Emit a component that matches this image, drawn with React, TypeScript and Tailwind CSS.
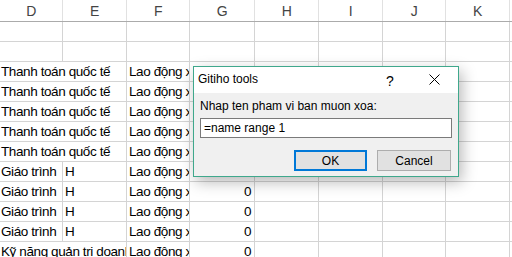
import React from "react"

const COLS = [
  { key: "D", w: 63 },
  { key: "E", w: 64 },
  { key: "F", w: 63 },
  { key: "G", w: 65 },
  { key: "H", w: 64 },
  { key: "I", w: 64 },
  { key: "J", w: 63 },
  { key: "K", w: 64 },
  { key: "L", w: 64 },
]

type Row = { d?: string; e?: string; f?: string; g?: string; span?: boolean }

const ROWS: Row[] = [
  {},
  {},
  ...Array.from({ length: 5 }, () => ({ d: "Thanh toán quốc tế", f: "Lao động xã hội", span: true })),
  ...Array.from({ length: 4 }, () => ({ d: "Giáo trình", e: "H", f: "Lao động xã hội", g: "0" })),
  { d: "Kỹ năng quản trị doanh nghiệp", f: "Lao động xã hội", g: "0", span: true },
]

const cell = "h-5 shrink-0 border-r border-b border-[#d4d4d4] overflow-hidden whitespace-nowrap leading-[19px] px-[1px]"

function SheetRow({ row }: { row: Row }) {
  return (
    <div className="flex">
      {row.span ? (
        <div className={cell} style={{ width: 127 }}>{row.d}</div>
      ) : (
        <>
          <div className={cell} style={{ width: 63 }}>{row.d}</div>
          <div className={`${cell} pl-[2px]`} style={{ width: 64 }}>{row.e}</div>
        </>
      )}
      <div className={`${cell} pl-[2px]`} style={{ width: 63 }}>{row.f}</div>
      <div className={`${cell} text-right pr-[3px]`} style={{ width: 65 }}>{row.g}</div>
      {COLS.slice(4).map((c) => (
        <div key={c.key} className={cell} style={{ width: c.w }} />
      ))}
    </div>
  )
}

function Dialog() {
  return (
    <div className="absolute left-[193px] top-[66px] w-[266px] h-[111px] border border-[#3fa88c] bg-[#f0f0f0] shadow-[3px_5px_14px_rgba(0,0,0,0.28)] font-['Liberation_Sans',Arial,sans-serif] text-[12px] tracking-normal text-black">
      <div className="h-[26px] bg-white flex items-center pl-[4px] relative">
        <span className="mt-[-2px]">Gitiho tools</span>
        <span className="absolute left-[192px] top-[4px] text-[14px]">?</span>
        <svg className="absolute left-[235px] top-[7px]" width="11" height="11" viewBox="0 0 11 11">
          <path d="M0.5 0.5L10.5 10.5M10.5 0.5L0.5 10.5" stroke="#000" strokeWidth="1" />
        </svg>
      </div>
      <div className="px-[6px] pt-[3px]">
        <div className="h-[20px] leading-[20px]">Nhap ten pham vi ban muon xoa:</div>
        <div className="mt-[2px] h-[20px] bg-white border border-[#7a7a7a] leading-[18px] pl-[3px]">=name range 1</div>
        <div className="flex justify-end gap-[10px] mt-[12px] pr-[1px]">
          <div className="w-[73px] h-[21px] bg-[#e1e1e1] border-2 border-[#0078d7] flex items-center justify-center">OK</div>
          <div className="w-[74px] h-[21px] bg-[#e1e1e1] border border-[#adadad] flex items-center justify-center">Cancel</div>
        </div>
      </div>
    </div>
  )
}

export default function App() {
  return (
    <div className="relative w-[512px] h-[257px] overflow-hidden bg-white font-['Liberation_Sans',Arial,sans-serif] text-[13.5px] tracking-[-0.4px] text-black">
      <div className="flex h-[22px] border-b border-[#ababab]">
        {COLS.map((c) => (
          <div
            key={c.key}
            className="shrink-0 border-r border-[#e1e1e1] flex items-center justify-center text-[#444] text-[14px] pt-[1px]"
            style={{ width: c.w }}
          >
            {c.key}
          </div>
        ))}
      </div>
      {ROWS.map((r, i) => (
        <SheetRow key={i} row={r} />
      ))}
      <Dialog />
    </div>
  )
}
